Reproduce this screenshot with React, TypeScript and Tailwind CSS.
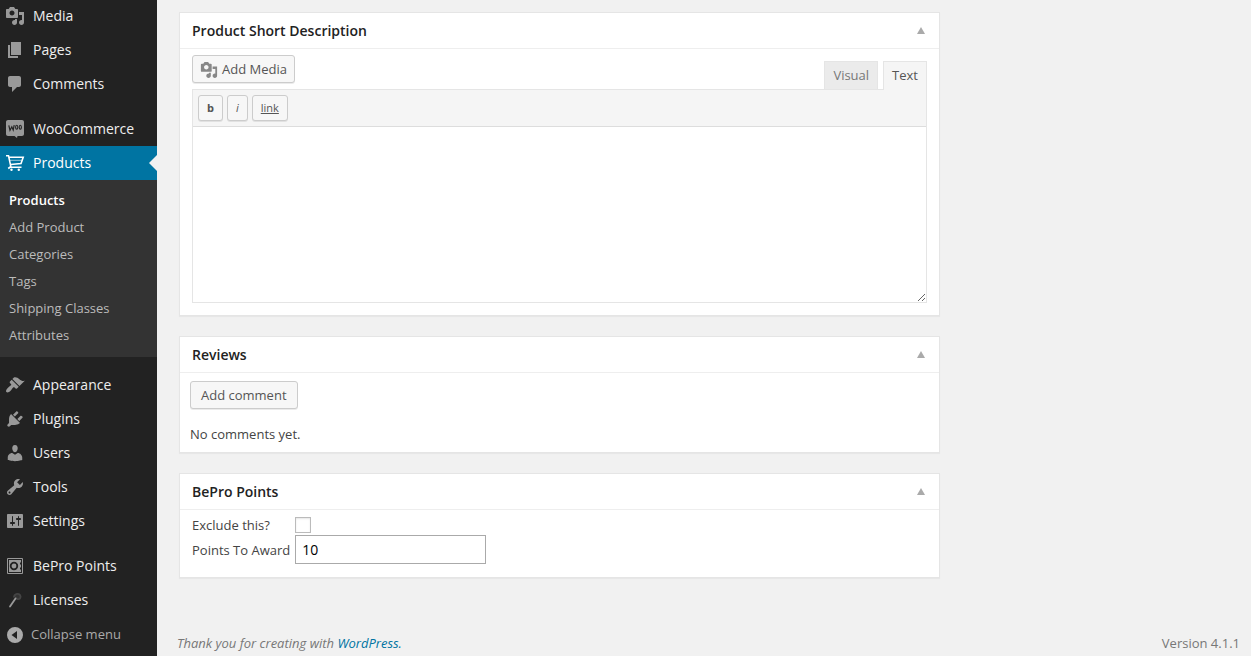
import type { ReactNode } from "react";

const icons: Record<string, ReactNode> = {
  media: (
    <path d="M13 11V4c0-.55-.45-1-1-1h-1.67L9 1H5L3.67 3H2c-.55 0-1 .45-1 1v7c0 .55.45 1 1 1h10c.55 0 1-.45 1-1zM7 4.5c1.38 0 2.5 1.12 2.5 2.5S8.38 9.5 7 9.5 4.5 8.38 4.5 7 5.62 4.5 7 4.5zM14 6h5v10.5c0 1.38-1.12 2.5-2.5 2.5S14 17.88 14 16.5s1.12-2.5 2.5-2.5c.17 0 .34.02.5.05V9h-3V6zm-4 8.05V13h2v3.5c0 1.38-1.12 2.5-2.5 2.5S7 17.88 7 16.5 8.12 14 9.5 14c.17 0 .34.02.5.05z" />
  ),
  pages: <path d="M6 15V2h10v13H6zm-1 1h8v2H3V5h2v11z" />,
  comments: (
    <path d="M5 2h9c1.1 0 2 .9 2 2v7c0 1.1-.9 2-2 2h-2l-5 5v-5H5c-1.1 0-2-.9-2-2V4c0-1.1.9-2 2-2z" />
  ),
  woo: (
    <>
      <path d="M3 1h14c1.1 0 2 .9 2 2v12c0 1.1-.9 2-2 2h-4.500l-.5 2L9.500 17H3c-1.100 0-2-.9-2-2V3c0-1.100.9-2 2-2z" />
      <path d="M3.800 6.300l1.200 5 1.800-3.500 1.400 3.300 1-5" fill="none" stroke="#222" strokeWidth="1.200" />
      <ellipse cx="11.700" cy="8.200" rx="1.100" ry="2" fill="none" stroke="#222" strokeWidth="1.100" />
      <ellipse cx="15.300" cy="8.200" rx="1.100" ry="2" fill="none" stroke="#222" strokeWidth="1.100" />
    </>
  ),
  cart: (
    <>
      <path
        d="M1 2.700h2.500L6 14.300h10.500M4 4.300h14.200l-2.200 6.200-10.500 1M3.200 15.500L6 13.500"
        fill="none"
        stroke="currentColor"
        strokeWidth="1.600"
      />
      <path d="M5 7.300h11.500" fill="none" stroke="currentColor" strokeWidth=".6" />
      <circle cx="6.500" cy="16.800" r="1.200" />
      <circle cx="13.800" cy="16.800" r="1.200" />
    </>
  ),
  appearance: (
    <path d="M14.48 11.06L7.41 3.99l1.5-1.5c.5-.56 2.3-.47 3.51.32 1.21.8 1.43 1.28 2.91 2.1 1.18.64 2.45 1.26 4.45.85zm-.71.71L6.7 4.7 4.93 6.47c-.39.39-.39 1.02 0 1.41l1.06 1.06c.39.39.39 1.03 0 1.42-.6.6-1.43 1.11-2.21 1.69-.35.26-.7.53-1.01.84C1.43 14.23.4 16.08 1.4 17.07c.99 1 2.84-.03 4.18-1.36.31-.31.58-.66.85-1.02.57-.78 1.08-1.61 1.69-2.21.39-.39 1.02-.39 1.41 0l1.06 1.06c.39.39 1.02.39 1.41 0z" />
  ),
  plugins: (
    <path d="M13.11 4.36L9.87 7.6 8 5.73l3.24-3.24c.35-.34 1.05-.2 1.56.32.52.51.66 1.21.31 1.55zm-8 1.77l.91-1.12 9.01 9.01-1.19.84c-.71.71-2.63 1.16-3.82 1.16H6.14L4.9 17.26c-.59.59-1.54.59-2.12 0-.59-.58-.59-1.53 0-2.12l1.24-1.24v-3.88c0-1.13.4-3.19 1.09-3.89zm7.26 3.97l3.24-3.24c.34-.35 1.04-.21 1.55.31.52.51.66 1.21.31 1.55l-3.24 3.25z" />
  ),
  users: (
    <path d="M10 9.25c-2.27 0-2.73-3.44-2.73-3.44C7 4.02 7.82 2 9.97 2c2.16 0 2.98 2.02 2.71 3.81 0 0-.41 3.44-2.68 3.44zm0 2.57L12.72 10c2.39 0 4.52 2.33 4.52 4.53v2.49s-3.65 1.13-7.24 1.13c-3.65 0-7.24-1.13-7.24-1.13v-2.49c0-2.25 1.94-4.48 4.47-4.48z" />
  ),
  tools: (
    <path d="M16.68 9.77c-1.34 1.34-3.3 1.67-4.95.99l-5.41 6.52c-.99.99-2.59.99-3.58 0s-.99-2.59 0-3.57l6.52-5.42c-.68-1.65-.35-3.61.99-4.95 1.28-1.28 3.12-1.62 4.72-1.06l-2.89 2.89 2.82 2.82 2.86-2.87c.53 1.58.18 3.39-1.08 4.65zM3.81 16.21c.4.39 1.04.39 1.43 0 .4-.4.4-1.04 0-1.43-.39-.4-1.03-.4-1.43 0-.39.39-.39 1.03 0 1.43z" />
  ),
  settings: (
    <path d="M18 16V4c0-.55-.45-1-1-1H3c-.55 0-1 .45-1 1v12c0 .55.45 1 1 1h14c.55 0 1-.45 1-1zM8 11h1c.55 0 1 .45 1 1s-.45 1-1 1H8v1.5c0 .28-.22.5-.5.5s-.5-.22-.5-.5V13H6c-.55 0-1-.45-1-1s.45-1 1-1h1V5.5c0-.28.22-.5.5-.5s.5.22.5.5V11zm5-2h-1c-.55 0-1-.45-1-1s.45-1 1-1h1V5.5c0-.28.22-.5.5-.5s.5.22.5.5V7h1c.55 0 1 .45 1 1s-.45 1-1 1h-1v5.5c0 .28-.22.5-.5.5s-.5-.22-.5-.5V9z" />
  ),
  points: (
    <>
      <path d="M2.5 2.5h15v15h-15z" fill="none" stroke="currentColor" />
      <path d="M4 4h12v2.500h-1v2h1v3h-1v2h1V16H4z" />
      <circle cx="9" cy="10" r="3.300" fill="none" stroke="#222" strokeWidth="1.800" />
    </>
  ),
  licenses: (
    <>
      <path
        d="M9 7.500C9 4 13 3 15 5c1.300 1.700.3 3.700-1.500 4.200-1.500 0-2.500-.7-2.500-2.200"
        fill="#333"
        stroke="#444"
        strokeWidth="1.800"
      />
      <path d="M5 16.500L10.500 8.500" stroke="#999" strokeWidth="1.800" strokeLinecap="round" />
    </>
  ),
  collapse: (
    <path
      fillRule="evenodd"
      d="M10 2a8 8 0 1 1 0 16 8 8 0 0 1 0-16zM12 6L6.500 10 12 14z"
    />
  ),
};

function Icon({ name, className }: { name: string; className: string }) {
  return (
    <svg viewBox="0 0 20 20" fill="currentColor" className={className} aria-hidden="true">
      {icons[name]}
    </svg>
  );
}

const menuGroups = [
  [
    { icon: "media", label: "Media" },
    { icon: "pages", label: "Pages" },
    { icon: "comments", label: "Comments" },
  ],
  [
    { icon: "woo", label: "WooCommerce" },
    { icon: "cart", label: "Products", active: true },
  ],
  [
    { icon: "appearance", label: "Appearance" },
    { icon: "plugins", label: "Plugins" },
    { icon: "users", label: "Users" },
    { icon: "tools", label: "Tools" },
    { icon: "settings", label: "Settings" },
  ],
  [
    { icon: "points", label: "BePro Points" },
    { icon: "licenses", label: "Licenses" },
  ],
];

const submenu = ["Products", "Add Product", "Categories", "Tags", "Shipping Classes", "Attributes"];

function MenuItem({ icon, label, active }: { icon: string; label: string; active?: boolean }) {
  return (
    <li>
      <a
        href="#"
        className={`relative flex h-[34px] items-center gap-2 pl-[5px] text-sm ${
          active ? "bg-[#0074a2] text-white" : "text-[#eee]"
        }`}
      >
        <Icon name={icon} className={`size-5 shrink-0 ${active ? "text-white" : "text-[#999]"}`} />
        {label}
        {active && (
          <span className="absolute right-0 top-1/2 -translate-y-1/2 border-y-8 border-r-8 border-y-transparent border-r-[#f1f1f1]" />
        )}
      </a>
      {active && (
        <ul className="bg-[#333] pb-2 pt-[7px] text-[13px]">
          {submenu.map((s, i) => (
            <li key={s}>
              <a
                href="#"
                className={`block pl-[9px] leading-[27px] ${i === 0 ? "font-semibold text-white" : "text-[#bbb]"}`}
              >
                {s}
              </a>
            </li>
          ))}
        </ul>
      )}
    </li>
  );
}

function Sidebar() {
  return (
    <nav className="-mt-px w-[157px] shrink-0 bg-[#222]">
      <div className="flex flex-col gap-[11px]">
        {menuGroups.map((group) => (
          <ul key={group[0].label}>
            {group.map((item) => (
              <MenuItem key={item.label} {...item} />
            ))}
          </ul>
        ))}
      </div>
      <button className="flex h-[34px] w-full items-center gap-[6px] pl-[5px] pt-px text-[13px] text-[#aaa]">
        <Icon name="collapse" className="size-5" />
        Collapse menu
      </button>
    </nav>
  );
}

function PostBox({ title, children }: { title: string; children: ReactNode }) {
  return (
    <section className="border border-[#e5e5e5] bg-white shadow-[0_1px_1px_rgba(0,0,0,0.04)]">
      <header className="flex h-9 items-center justify-between border-b border-[#eee] pl-3 pr-[14px]">
        <h3 className="text-sm font-semibold text-[#222]">{title}</h3>
        <button aria-label={`Toggle ${title}`}>
          <svg viewBox="0 0 8 7" className="h-[7px] w-2 fill-[#aaa]">
            <path d="M4 0l4 7H0z" />
          </svg>
        </button>
      </header>
      {children}
    </section>
  );
}

const buttonStyle =
  "rounded-[3px] border border-[#ccc] bg-[#f7f7f7] text-[#555] shadow-[0_1px_0_rgba(0,0,0,0.08)]";

export default function App() {
  return (
    <div className="flex min-h-screen bg-[#f1f1f1] font-['Open_Sans',sans-serif] text-[13px] text-[#444]">
      <Sidebar />
      <div className="flex min-w-0 flex-1 flex-col">
        <main className="flex flex-col gap-5 pl-[22px] pr-[311px] pt-3">
          <PostBox title="Product Short Description">
            <div className="px-3 pb-3 pt-[6px]">
              <div className="flex items-start justify-between">
                <button className={`flex h-7 items-center gap-1 px-[7px] pt-px ${buttonStyle}`}>
                  <Icon name="media" className="size-[18px] text-[#888]" />
                  Add Media
                </button>
                <div className="flex items-start gap-[5px] pt-[6px]">
                  <button className="h-7 border border-b-0 border-[#e5e5e5] bg-[#ebebeb] px-2 text-[#777]">
                    Visual
                  </button>
                  <button className="relative -mb-px h-[29px] border border-b-0 border-[#e5e5e5] bg-[#f5f5f5] px-2 text-[#555]">
                    Text
                  </button>
                </div>
              </div>
              <div className="border border-[#e5e5e5]">
                <div className="flex h-9 items-center gap-1 bg-[#f5f5f5] px-[5px] text-[11px]">
                  <button className={`h-[26px] px-2 font-bold ${buttonStyle}`}>b</button>
                  <button className={`h-[26px] px-2 italic ${buttonStyle}`}>i</button>
                  <button className={`h-[26px] px-2 underline ${buttonStyle}`}>link</button>
                </div>
                <textarea
                  aria-label="Product Short Description"
                  className="block h-44 w-full resize-y border-t border-[#ddd] bg-white p-[10px] outline-none"
                />
              </div>
            </div>
          </PostBox>

          <PostBox title="Reviews">
            <div className="px-[10px] pb-2 pt-2">
              <button className={`h-7 px-[10px] pt-px ${buttonStyle}`}>Add comment</button>
              <p className="mt-[15px] leading-5">No comments yet.</p>
            </div>
          </PostBox>

          <PostBox title="BePro Points">
            <div className="grid grid-cols-[auto_1fr] items-center gap-x-[5px] px-3 pb-[13px] pt-[5px]">
              <label htmlFor="exclude" className="leading-4">
                Exclude this?
              </label>
              <input
                id="exclude"
                type="checkbox"
                className="my-[2px] size-4 appearance-none border border-[#bbb] bg-white shadow-[inset_0_1px_2px_rgba(0,0,0,0.1)]"
              />
              <label htmlFor="points" className="leading-4">
                Points To Award
              </label>
              <input
                id="points"
                type="text"
                defaultValue="10"
                className="h-[29px] w-[191px] border border-[#aaa] bg-white px-[6px] text-sm text-black"
              />
            </div>
          </PostBox>
        </main>

        <footer className="mt-auto flex justify-between pb-[3px] pl-5 pr-[11px] leading-5 text-[#777]">
          <p className="italic">
            Thank you for creating with{" "}
            <a href="#" className="text-[#0074a2]">
              WordPress.
            </a>
          </p>
          <p>Version 4.1.1</p>
        </footer>
      </div>
    </div>
  );
}
